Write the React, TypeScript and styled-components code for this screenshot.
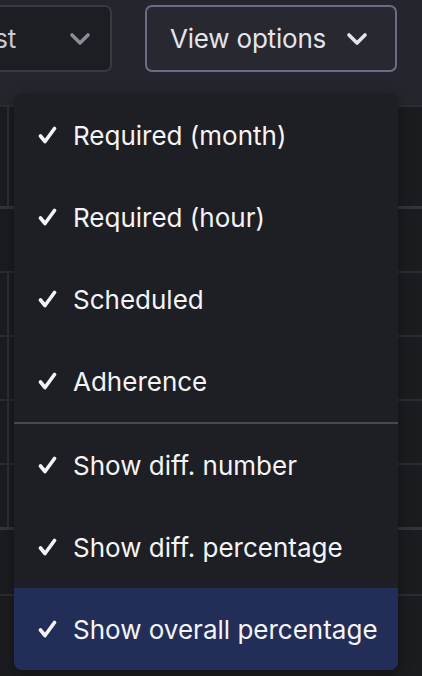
import styled, { createGlobalStyle } from "styled-components";

const GlobalStyle = createGlobalStyle`
  html, body {
    margin: 0;
    padding: 0;
    background: #25262d;
    overflow: hidden;
  }
  body {
    font-family: Inter, "Noto Sans", sans-serif;
  }
`;

const Page = styled.div`
  position: relative;
  width: 422px;
  height: 676px;
  overflow: hidden;
  background: #25262d;
`;

const Toolbar = styled.div`
  display: flex;
  justify-content: flex-end;
  align-items: flex-start;
  gap: 33px;
  height: 105px;
  box-sizing: border-box;
  padding: 5px 25px 0 0;
`;

const SelectButton = styled.button<{ $outlined?: boolean }>`
  flex-shrink: 0;
  display: flex;
  align-items: center;
  justify-content: ${(p) => (p.$outlined ? "flex-start" : "flex-end")};
  gap: ${(p) => (p.$outlined ? "20px" : "53px")};
  width: ${(p) => (p.$outlined ? "252px" : "200px")};
  height: 67px;
  box-sizing: border-box;
  padding: ${(p) => (p.$outlined ? "0 0 0 23px" : "0 19px 0 0")};
  border-radius: 7px;
  border: 2px solid ${(p) => (p.$outlined ? "#6c6c84" : "#383942")};
  background: ${(p) => (p.$outlined ? "#272830" : "#1d1e23")};
  color: ${(p) => (p.$outlined ? "#e4e4ea" : "#c8c8d0")};
  font-family: Inter, "Noto Sans", sans-serif;
  font-size: 26px;
  font-weight: 400;
  letter-spacing: -0.2px;
  white-space: nowrap;

  svg {
    flex-shrink: 0;
  }
`;

const Chevron = ({ color }: { color: string }) => (
  <svg width="22" height="14" viewBox="0 0 22 14" fill="none">
    <path d="M3 3 L11 11 L19 3" stroke={color} strokeWidth="3.6" strokeLinecap="round" strokeLinejoin="round" />
  </svg>
);

const Table = styled.div`
  display: flex;
  flex-direction: column;
  background: #1b1c20;
`;

const Row = styled.div<{ $h: number; $thick?: boolean }>`
  display: flex;
  height: ${(p) => p.$h}px;
  border-top: ${(p) => (p.$thick ? "3px solid #33343c" : "2px solid #2b2c33")};
`;

const EdgeCell = styled.div<{ $split?: boolean }>`
  width: 7px;
  border-right: 2px solid ${(p) => (p.$split ? "#2e2f36" : "transparent")};
`;

const Menu = styled.div`
  position: absolute;
  top: 94px;
  left: 14px;
  width: 384px;
  border-radius: 8px;
  overflow: hidden;
  background: #1e1f24;
  box-shadow: 0 4px 14px rgba(0, 0, 0, 0.35);
`;

const Item = styled.div<{ $active?: boolean }>`
  display: flex;
  align-items: center;
  gap: 16px;
  height: 82px;
  padding-left: 24px;
  background: ${(p) => (p.$active ? "#232e58" : "transparent")};
  color: #f4f4f7;
  font-family: Inter, "Noto Sans", sans-serif;
  font-size: 26px;
  letter-spacing: 0;
`;

const Divider = styled.div`
  height: 2px;
  background: #474853;
`;

const Check = () => (
  <svg width="19" height="18" viewBox="0 0 19 18" fill="none">
    <path d="M2.5 10 L7 15.5 L16.5 2.5" stroke="#f4f4f7" strokeWidth="3.6" strokeLinecap="round" strokeLinejoin="round" />
  </svg>
);

const rows = [
  { h: 99, split: true },
  { h: 62, split: false, thick: true },
  { h: 62, split: true },
  { h: 62, split: true },
  { h: 62, split: true },
  { h: 62, split: true },
  { h: 64, split: false, thick: true },
  { h: 80, split: false },
];

const groups = [
  ["Required (month)", "Required (hour)", "Scheduled", "Adherence"],
  ["Show diff. number", "Show diff. percentage", "Show overall percentage"],
];

export default function App() {
  return (
    <Page>
      <GlobalStyle />
      <Toolbar>
        <SelectButton>
          <span>Forecast</span>
          <Chevron color="#8b8b97" />
        </SelectButton>
        <SelectButton $outlined>
          <span>View options</span>
          <Chevron color="#e4e4ea" />
        </SelectButton>
      </Toolbar>
      <Table>
        {rows.map((r, i) => (
          <Row key={i} $h={r.h} $thick={r.thick}>
            <EdgeCell $split={r.split} />
          </Row>
        ))}
      </Table>
      <Menu>
        {groups.map((g, gi) => (
          <div key={gi}>
            {gi > 0 && <Divider />}
            {g.map((label) => (
              <Item key={label} $active={label === "Show overall percentage"}>
                <Check />
                <span>{label}</span>
              </Item>
            ))}
          </div>
        ))}
      </Menu>
    </Page>
  );
}
